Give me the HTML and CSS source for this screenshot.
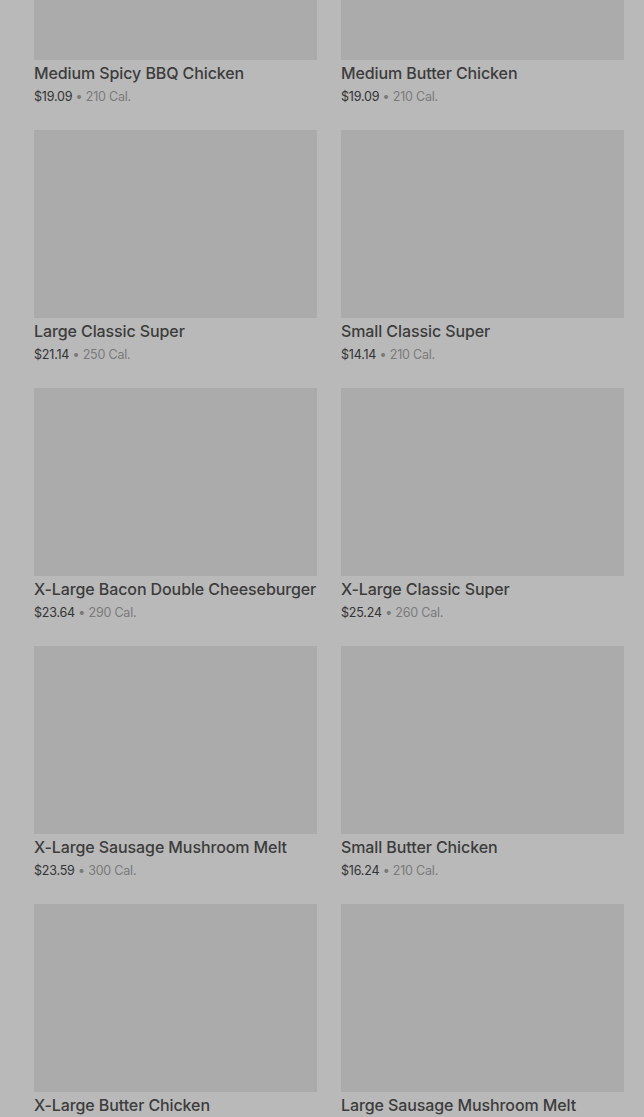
FILE: index.html
```html
<!DOCTYPE html>
<html lang="en">
<head>
    <meta charset="UTF-8">
    <meta name="viewport" content="width=device-width, initial-scale=1.0">
    <title>Menu</title>
    <link rel="stylesheet" href="styles.css">
</head>
<body>
    <div class="menu-grid">
        <div class="item">
            <div class="item-img"></div>
            <div class="item-name">Medium Spicy BBQ Chicken</div>
            <div class="item-meta"><span class="price">$19.09</span> • 210 Cal.</div>
        </div>
        <div class="item">
            <div class="item-img"></div>
            <div class="item-name">Medium Butter Chicken</div>
            <div class="item-meta"><span class="price">$19.09</span> • 210 Cal.</div>
        </div>
        <div class="item">
            <div class="item-img"></div>
            <div class="item-name">Large Classic Super</div>
            <div class="item-meta"><span class="price">$21.14</span> • 250 Cal.</div>
        </div>
        <div class="item">
            <div class="item-img"></div>
            <div class="item-name">Small Classic Super</div>
            <div class="item-meta"><span class="price">$14.14</span> • 210 Cal.</div>
        </div>
        <div class="item">
            <div class="item-img"></div>
            <div class="item-name">X-Large Bacon Double Cheeseburger</div>
            <div class="item-meta"><span class="price">$23.64</span> • 290 Cal.</div>
        </div>
        <div class="item">
            <div class="item-img"></div>
            <div class="item-name">X-Large Classic Super</div>
            <div class="item-meta"><span class="price">$25.24</span> • 260 Cal.</div>
        </div>
        <div class="item">
            <div class="item-img"></div>
            <div class="item-name">X-Large Sausage Mushroom Melt</div>
            <div class="item-meta"><span class="price">$23.59</span> • 300 Cal.</div>
        </div>
        <div class="item">
            <div class="item-img"></div>
            <div class="item-name">Small Butter Chicken</div>
            <div class="item-meta"><span class="price">$16.24</span> • 210 Cal.</div>
        </div>
        <div class="item">
            <div class="item-img"></div>
            <div class="item-name">X-Large Butter Chicken</div>
            <div class="item-meta"><span class="price">$18.79</span> • 210 Cal.</div>
        </div>
        <div class="item">
            <div class="item-img"></div>
            <div class="item-name">Large Sausage Mushroom Melt</div>
            <div class="item-meta"><span class="price">$21.39</span> • 280 Cal.</div>
        </div>
    </div>
</body>
</html>
```

FILE: styles.css
```css
body {
    margin: 0;
    background-color: #b9b9b9;
    font-family: Inter, "Noto Sans", Arial, sans-serif;
    overflow: hidden;
}
.menu-grid {
    display: grid;
    grid-template-columns: minmax(0, 1fr) minmax(0, 1fr);
    column-gap: 24px;
    row-gap: 23px;
    padding: 0 20px 0 34px;
    margin-top: -128px;
}
.item-img {
    height: 188px;
    background-color: #ababab;
}
.item-name {
    margin-top: 1px;
    font-size: 16px;
    font-weight: 500;
    line-height: 24px;
    color: #3c3c3c;
    white-space: nowrap;
    letter-spacing: -0.1px;
}
.item-meta {
    margin-top: 2px;
    font-size: 12.5px;
    line-height: 20px;
    color: #7a7a7a;
    letter-spacing: -0.2px;
}
.price {
    color: #333;
}
```
